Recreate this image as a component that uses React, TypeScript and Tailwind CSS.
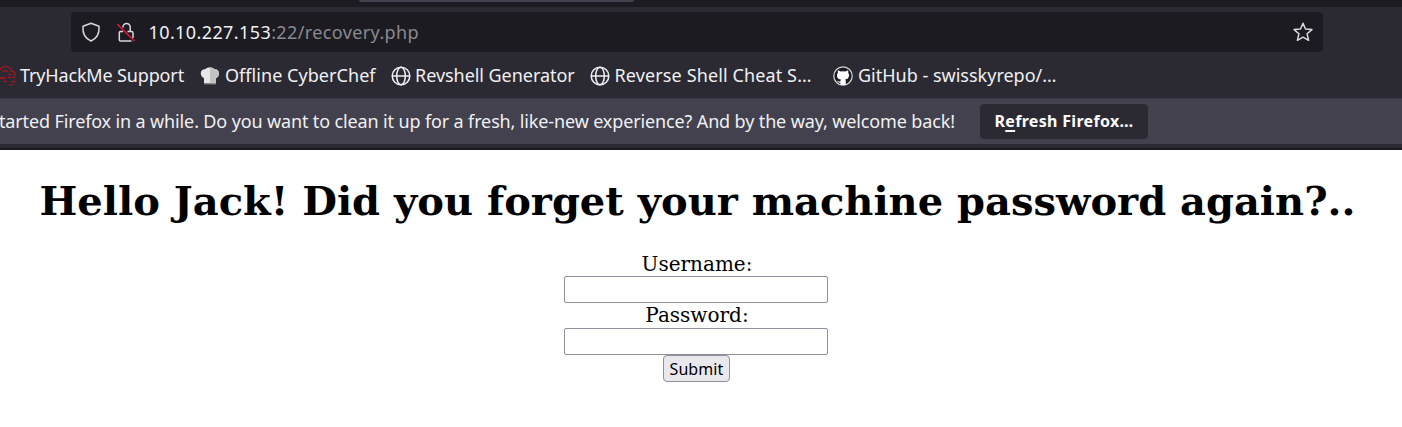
import type { ReactNode } from "react";

function Globe() {
  return (
    <svg viewBox="0 0 20 20" className="size-5 shrink-0" fill="none" stroke="#f0f0f4" strokeWidth="1.5">
      <circle cx="10" cy="10" r="8.8" />
      <ellipse cx="10" cy="10" rx="4.3" ry="8.8" />
      <path d="M1.2 10h17.6" />
    </svg>
  );
}

function Cloud() {
  return (
    <svg viewBox="0 0 20 20" className="size-5 shrink-0" fill="none" stroke="#a3161c" strokeWidth="1.3">
      <path d="M9 12H4.500a3.500 3.500 0 0 1-.5-7M4 3.500C6-.5 14-.5 15.500 5" />
      <path d="M6 5.500q3-2 6 .5M15 5q4 0 4.500 5M4 12h6M12 11.500h3M16.500 11.500h3M12 8.500q2-1 4 .5M8 15.500h3M15.500 15.500h4M13.500 19h2M16.500 19l1.500-1" />
    </svg>
  );
}

function ChefHat() {
  return (
    <svg viewBox="0 0 20 20" className="size-5 shrink-0">
      <path d="M4 17.500V12.200C-.5 10.500-.5 3 5.200 3.200 6.500.8 13 .8 14.500 3.200 20 3 20.500 10 16 12.200V17.500Z" fill="#e6e6e6" />
      <path d="M10 1.400C12 1.400 13.800 2 14.500 3.200 20 3 20.500 10 16 12.200V17.500H10Z" fill="#c2c2c2" />
      <path d="M4 17.500h12v1H4Z" fill="#77777c" />
    </svg>
  );
}

function GitHubMark() {
  return (
    <svg viewBox="0 0 20 20" className="size-5 shrink-0">
      <circle cx="10" cy="10" r="9.200" fill="#1c1b22" stroke="#d5d5da" strokeWidth="1.200" />
      <path d="M5 4.200 7.700 5.500Q10 5 12.300 5.500L15 4.200Q15.500 5.500 15.200 6.700 16.300 8 16 10 15.500 13 12.200 13.500 12.800 14.200 12.800 15.500V19H7.400V16.700C5 17 4.900 15.300 3.900 14.700 5.300 14.400 5.700 16 7.400 15.400 7.400 14.500 7.600 14 8 13.500 4.500 13 4 11 4 9.500Q4 7.800 4.900 6.700 4.500 5.500 5 4.200Z" fill="#fff" />
    </svg>
  );
}

function Bookmark({ icon, className, children }: { icon: ReactNode; className: string; children: string }) {
  return (
    <div className={`flex shrink-0 items-center ${className}`}>
      {icon}
      <span className="-mt-0.5 whitespace-nowrap">{children}</span>
    </div>
  );
}

export default function App() {
  return (
    <div className="flex h-[427px] w-full flex-col overflow-hidden bg-white font-['Noto_Sans',sans-serif] text-lg text-[#f0f0f4]">
      <div className="h-[7px] shrink-0 bg-[#1c1b22]">
        <div className="ml-[359px] h-[2px] w-[275px] rounded-b bg-[#42414d]" />
      </div>

      <div className="h-[91px] shrink-0 bg-[#2b2a33] pt-[5px]">
        <div className="ml-[71px] flex h-10 w-[1252px] items-center rounded bg-[#1c1b22] px-[10px]">
          <svg viewBox="0 0 20 20" className="size-5" fill="none" stroke="#d8d8dc" strokeWidth="1.500" strokeLinejoin="round">
            <path d="M10 1.200 18 4.300C18.500 10.500 16 16.500 10 19 4 16.500 1.500 10.500 2 4.300Z" />
          </svg>
          <svg viewBox="0 0 20 20" className="ml-[15px] size-5" fill="none">
            <path d="M7 5.500V5a3.600 3.600 0 0 1 7.200 0V9.200M11.500 9.500H15.500a1.500 1.500 0 0 1 1.500 1.500V16M15.500 19H4.500A1.200 1.200 0 0 1 3.300 17.800V10.700A1.200 1.200 0 0 1 4.500 9.500H7" stroke="#d8d8dc" strokeWidth="1.500" />
            <path d="M1.300 2.300 18.500 19" stroke="#e3143c" strokeWidth="1.600" />
          </svg>
          <span className="ml-[12.5px] whitespace-nowrap tracking-[0.4px]">10.10.227.153</span>
          <span className="flex-1 whitespace-nowrap tracking-[0.38px] text-[#8a898f]">:22/recovery.php</span>
          <svg viewBox="0 0 20 20" className="size-5" fill="none" stroke="#dcdce0" strokeWidth="1.500" strokeLinejoin="round">
            <path d="m10 1.300 2.500 5.700 6.400.6-4.800 4.200 1.500 6.500L10 15.200l-5.600 3.100 1.500-6.500L1.100 7.600 7.500 7Z" />
          </svg>
        </div>
        <div className="-ml-1 flex h-12 items-center">
          <Bookmark icon={<Cloud />} className="w-[204px] gap-[4px] tracking-[-0.15px]">TryHackMe Support</Bookmark>
          <Bookmark icon={<ChefHat />} className="w-[191px] gap-[5px] tracking-[0.05px]">Offline CyberChef</Bookmark>
          <Bookmark icon={<Globe />} className="w-[199px] gap-[4px] tracking-[-0.05px]">Revshell Generator</Bookmark>
          <Bookmark icon={<Globe />} className="w-[243px] gap-[4.500px] tracking-[0.12px]">Reverse Shell Cheat S…</Bookmark>
          <Bookmark icon={<GitHubMark />} className="gap-[5px]">GitHub - swisskyrepo/…</Bookmark>
        </div>
      </div>

      <div className="flex h-[46px] shrink-0 items-center border-t border-[#3a3944] bg-[#42414d]">
        <span className="-mt-0.5 -ml-px w-[981px] shrink-0 whitespace-nowrap tracking-[-0.135px]">
          tarted Firefox in a while. Do you want to clean it up for a fresh, like-new experience? And by the way, welcome back!
        </span>
        <button className="h-[35px] w-[168px] rounded bg-[#2b2a33] pb-0.5 text-base font-bold tracking-[0.32px] text-[#fbfbfe]">
          R<span className="underline decoration-2 underline-offset-[3px]">e</span>fresh Firefox…
        </button>
      </div>
      <div className="h-[6px] shrink-0 border-b-2 border-[#1c1b22] bg-[#2b2a33]" />

      <main className="flex w-[1394px] flex-col items-center font-['DejaVu_Serif',serif] text-xl text-black">
        <h1 className="mt-[27px] ml-px text-[40px] leading-[48px] font-bold whitespace-nowrap">
          Hello Jack! Did you forget your machine password again?..
        </h1>
        <form className="mt-[27px] flex w-[264px] flex-col pr-0 text-center -ml-0.5">
          <label htmlFor="username" className="ml-[2px] h-6 leading-6">Username:</label>
          <input id="username" className="h-[27px] w-[264px] rounded-[2px] border border-[#8f8f9d] bg-white" />
          <label htmlFor="password" className="ml-[2px] h-[25px] leading-6">Password:</label>
          <input id="password" type="password" className="h-[27px] w-[264px] rounded-[2px] border border-[#8f8f9d] bg-white" />
          <button type="button" className="ml-[99px] h-[27px] w-[67px] rounded border border-[#8f8f9d] bg-[#e9e9ed] font-['Noto_Sans',sans-serif] text-base leading-6 tracking-[0.1px]">
            Submit
          </button>
        </form>
      </main>
    </div>
  );
}
